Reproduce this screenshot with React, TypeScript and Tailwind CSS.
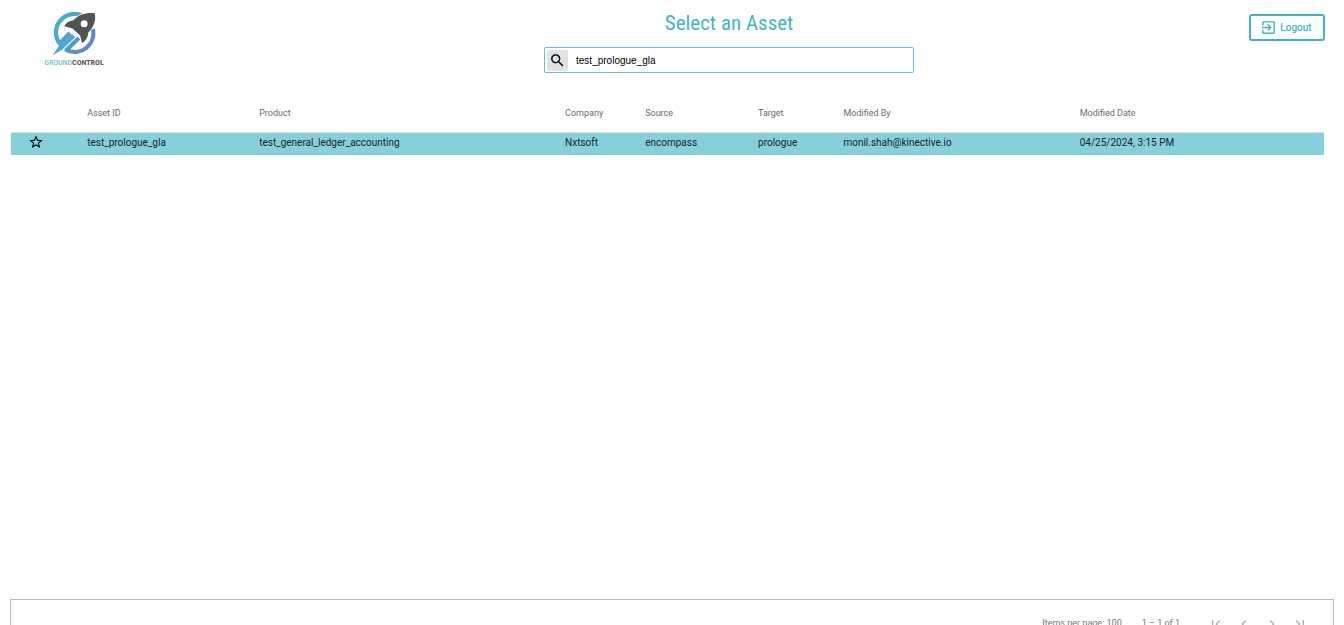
import React, { useState } from "react";

type Asset = {
  id: string;
  product: string;
  company: string;
  source: string;
  target: string;
  modifiedBy: string;
  modifiedDate: string;
};

const assets: Asset[] = [
  {
    id: "test_prologue_gla",
    product: "test_general_ledger_accounting",
    company: "Nxtsoft",
    source: "encompass",
    target: "prologue",
    modifiedBy: "monil.shah@kinective.io",
    modifiedDate: "04/25/2024, 3:15 PM",
  },
];

const headings = ["Asset ID", "Product", "Company", "Source", "Target", "Modified By", "Modified Date"];

function Icon({ d, className }: { d: string; className: string }) {
  return (
    <svg viewBox="0 0 24 24" className={className} fill="currentColor" aria-hidden="true">
      <path d={d} />
    </svg>
  );
}

const icons = {
  search:
    "M15.5 14h-.79l-.28-.27C15.41 12.59 16 11.11 16 9.5 16 5.91 13.09 3 9.5 3S3 5.91 3 9.5 5.91 16 9.5 16c1.61 0 3.09-.59 4.23-1.57l.27.28v.79l5 4.99L20.49 19l-4.99-5zm-6 0C7.01 14 5 11.99 5 9.5S7.01 5 9.5 5 14 7.01 14 9.5 11.99 14 9.5 14z",
  exit: "M10.09 15.59L11.5 17l5-5-5-5-1.41 1.41L12.67 11H3v2h9.67l-2.58 2.59zM19 3H5c-1.11 0-2 .9-2 2v4h2V5h14v14H5v-4H3v4c0 1.1.89 2 2 2h14c1.1 0 2-.9 2-2V5c0-1.1-.9-2-2-2z",
  star: "M22 9.24l-7.19-.62L12 2 9.19 8.63 2 9.24l5.46 4.73L5.82 21 12 17.27 18.18 21l-1.63-7.03L22 9.24zM12 15.4l-3.76 2.27 1-4.28-3.32-2.88 4.38-.38L12 6.1l1.71 4.04 4.38.38-3.32 2.88 1 4.28L12 15.4z",
  first: "M18.41 16.59L13.82 12l4.59-4.59L17 6l-6 6 6 6zM6 6h2v12H6z",
  previous: "M15.41 7.41L14 6l-6 6 6 6 1.41-1.41L10.83 12z",
  next: "M10 6L8.59 7.41 13.17 12l-4.58 4.59L10 18l6-6z",
  last: "M5.59 7.41L10.18 12l-4.59 4.59L7 18l6-6-6-6zM16 6h2v12h-2z",
};

function Logo() {
  return (
    <div className="flex w-[58px] flex-col items-center">
      <svg viewBox="0 0 44 44" className="size-11" aria-hidden="true">
        <defs>
          <linearGradient id="ring" gradientUnits="userSpaceOnUse" x1="2" y1="10" x2="40" y2="36">
            <stop offset="0" stopColor="#45b3cb" />
            <stop offset="1" stopColor="#5f84d2" />
          </linearGradient>
        </defs>
        <g fill="none" stroke="url(#ring)" strokeWidth="4.200" strokeLinejoin="round">
          <path d="M30 3.500A18.600 18.600 0 0 0 7.500 31.500L18 21" />
          <path d="M40.800 17A18.600 18.600 0 0 1 14.500 38L27 26" />
        </g>
        <path d="M0.500 43.500L6.500 34.500L20 22L23.500 25L10 37.800Z" fill="#4ba9d0" />
        <path
          d="M42.800 1.300C34.800 0.400 26.500 2.600 21 8.600C17 9 14 11 12.300 14.300L20.500 16.500L28.100 23.500L30.100 31.300C34 28.500 36.200 25 36.300 20.500C42 15 44 8.500 42.800 1.300Z"
          fill="#525357"
          stroke="#fff"
          strokeWidth="1.400"
          paintOrder="stroke"
        />
        <circle cx="32.200" cy="11.700" r="3.500" fill="#fff" />
      </svg>
      <div className="font-['Roboto_Condensed',sans-serif] text-[8px] leading-[14px] whitespace-nowrap text-[#57585b]">
        <span className="text-[#45bccb]">GROUND</span>
        <span className="font-bold">CONTROL</span>
      </div>
    </div>
  );
}

export default function App() {
  const [query, setQuery] = useState("test_prologue_gla");
  return (
    <div className="h-screen overflow-hidden bg-white font-[Roboto,sans-serif] text-[#212121]">
      <div className="flex h-[calc(100vh-26px)] flex-col">
        <header className="flex h-[95px] shrink-0 items-start justify-between pr-[19px] pl-[45px]">
          <div className="flex flex-[17] pt-3">
            <Logo />
          </div>
          <div className="flex w-[370px] flex-col pt-[7px]">
            <h1 className="text-center font-['Roboto_Condensed',sans-serif] text-[21px] leading-8 text-[#43b5ca]">
              Select an Asset
            </h1>
            <label className="mt-2 flex h-[26px] items-center rounded-xs border border-[#63c3d3] pl-0.5">
              <span className="flex size-[21px] items-center justify-center rounded-xs bg-[#e2e2e2] text-black">
                <Icon d={icons.search} className="size-[17px]" />
              </span>
              <input
                aria-label="Search assets"
                value={query}
                onChange={(e) => setQuery(e.target.value)}
                className="ml-2 min-w-0 flex-1 bg-transparent font-['Liberation_Sans',sans-serif] text-[10px] text-black outline-none"
              />
            </label>
          </div>
          <div className="flex flex-[14] justify-end pt-[14px]">
            <button className="flex h-[27px] w-[76px] items-center justify-center gap-[3px] rounded-[3px] border-2 border-[#3fb2c5] pr-0.5 text-[10px] font-medium text-[#3fb2c5]">
              <Icon d={icons.exit} className="size-[17px]" />
              Logout
            </button>
          </div>
        </header>
        <main className="flex-1 pr-5 pl-[11px]">
          <table className="w-full table-fixed border-collapse text-left">
            <colgroup>
              <col className="w-[5.8%]" />
              <col className="w-[13.1%]" />
              <col className="w-[23.3%]" />
              <col className="w-[6.1%]" />
              <col className="w-[8.6%]" />
              <col className="w-[6.5%]" />
              <col className="w-[18%]" />
              <col className="w-[18.6%]" />
            </colgroup>
            <thead>
              <tr className="h-[37px] border-b border-[#e0e0e0] text-[9px] text-[#6b6b6b]">
                <td />
                {headings.map((h) => (
                  <th key={h} scope="col" className="font-normal">
                    {h}
                  </th>
                ))}
              </tr>
            </thead>
            <tbody>
              {assets.map((a) => (
                <tr key={a.id} className="h-[23px] bg-[#86d0dc] text-[10px] leading-4 [&>td]:pb-0.5">
                  <td>
                    <button aria-label="Add to favorites" className="ml-[17px] flex items-center pb-0.5 text-black">
                      <Icon d={icons.star} className="size-4" />
                    </button>
                  </td>
                  <td>{a.id}</td>
                  <td>{a.product}</td>
                  <td>{a.company}</td>
                  <td>{a.source}</td>
                  <td>{a.target}</td>
                  <td>{a.modifiedBy}</td>
                  <td>{a.modifiedDate}</td>
                </tr>
              ))}
            </tbody>
          </table>
        </main>
      </div>
      <footer className="mx-[10px] flex h-[50px] items-center justify-end border border-[#bdbdbd] pr-[25px] text-[9px] text-[#757575]">
        <span>Items per page: 100</span>
        <span className="ml-5">1 – 1 of 1</span>
        <nav aria-label="Pagination" className="ml-7 flex gap-3 text-[#b0b0b0]">
          <button aria-label="First page" disabled><Icon d={icons.first} className="size-4" /></button>
          <button aria-label="Previous page" disabled><Icon d={icons.previous} className="size-4" /></button>
          <button aria-label="Next page" disabled><Icon d={icons.next} className="size-4" /></button>
          <button aria-label="Last page" disabled><Icon d={icons.last} className="size-4" /></button>
        </nav>
      </footer>
    </div>
  );
}
